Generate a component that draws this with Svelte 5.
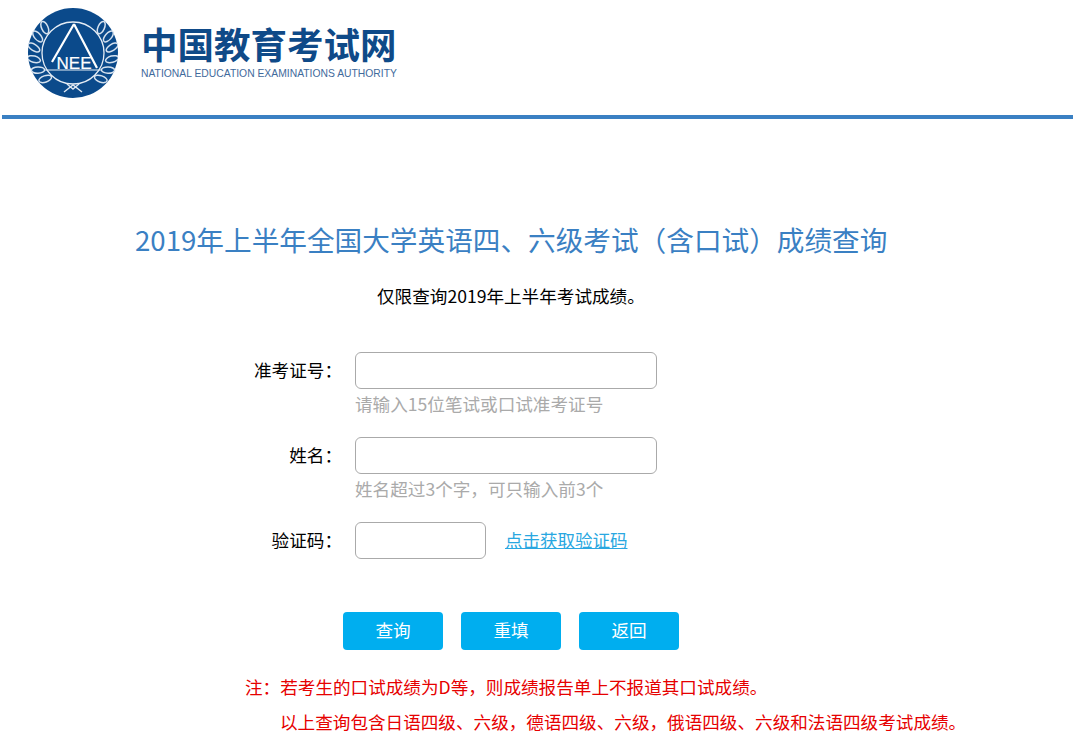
<script>
  const leaves = [
    [-138, 38], [-155, 39], [-172, 39.5], [-189, 39.5], [-206, 39], [-223, 38],
    [-42, 38], [-25, 39], [-8, 39.5], [9, 39.5], [26, 39], [43, 38]
  ].map(([deg, r]) => {
    const a = (deg * Math.PI) / 180;
    const left = deg < -90;
    return { x: 45 + r * Math.cos(a), y: 45 + r * Math.sin(a), rot: deg + 90 + (left ? 24 : -24) };
  });

  const fields = [
    { label: "准考证号：", hint: "请输入15位笔试或口试准考证号" },
    { label: "姓名：", hint: "姓名超过3个字，可只输入前3个" }
  ];
</script>

<div class="page">
  <header class="header">
    <svg class="emblem" viewBox="0 0 90 90" width="90" height="90" aria-label="NEEA">
      <circle cx="45" cy="45" r="45" fill="#0b4a8b" />
      {#each leaves as l}
        <ellipse cx={l.x} cy={l.y} rx="3.2" ry="6.6" fill="#0b4a8b" stroke="#d5e1ee" stroke-width="1.5" transform="rotate({l.rot} {l.x} {l.y})" />
      {/each}
      <circle cx="45" cy="45" r="31" fill="#0b4a8b" stroke="#e6edf5" stroke-width="1.3" />
      <path d="M46 16 L24 54 M46 16 L69 60" fill="none" stroke="#fff" stroke-width="2.2" />
      <path d="M16 62 H74" fill="none" stroke="#e6edf5" stroke-width="1.2" />
      <text x="46" y="60.5" text-anchor="middle" class="nee">NEE</text>
      <path d="M36 84 L45 77 L54 84 M39 76 L45 81 L51 76" fill="none" stroke="#dfe8f2" stroke-width="1.4" />
    </svg>
    <div class="brand">
      <div class="brand-cn">中国教育考试网</div>
      <div class="brand-en">NATIONAL EDUCATION EXAMINATIONS AUTHORITY</div>
    </div>
  </header>

  <main class="main">
    <h1 class="title">2019年上半年全国大学英语四、六级考试（含口试）成绩查询</h1>
    <p class="subtitle">仅限查询2019年上半年考试成绩。</p>

    <form class="form" onsubmit={(e) => e.preventDefault()}>
      {#each fields as f}
        <div class="row">
          <label class="label" for={f.label}>{f.label}</label>
          <div class="control">
            <input id={f.label} class="input" type="text" />
            <div class="hint">{f.hint}</div>
          </div>
        </div>
      {/each}
      <div class="row">
        <label class="label" for="code">验证码：</label>
        <div class="control code">
          <input id="code" class="input short" type="text" />
          <a class="link" href="#top">点击获取验证码</a>
        </div>
      </div>

      <div class="buttons">
        <button class="btn" type="submit">查询</button>
        <button class="btn" type="reset">重填</button>
        <button class="btn" type="button">返回</button>
      </div>
    </form>

    <div class="notes">
      <p>注：若考生的口试成绩为D等，则成绩报告单上不报道其口试成绩。</p>
      <p class="indent">以上查询包含日语四级、六级，德语四级、六级，俄语四级、六级和法语四级考试成绩。</p>
    </div>
  </main>
</div>

<style>
  :global(body) {
    margin: 0;
    background: #fff;
    font-family: "Noto Sans CJK SC", "Liberation Sans", sans-serif;
    color: #000;
  }

  .page {
    height: 755px;
    overflow: hidden;
  }

  .header {
    height: 107px;
    margin-left: 2px;
    padding: 8px 0 0 26px;
    display: flex;
    gap: 23px;
    border-bottom: 4px solid #3a80c3;
  }

  .emblem {
    flex: none;
  }

  .nee {
    font: 400 17px "Liberation Sans", sans-serif;
    fill: #fff;
    stroke: #fff;
    stroke-width: 0.2px;
  }

  .brand {
    padding-top: 14px;
  }

  .brand-cn {
    font-size: 36.5px;
    font-weight: 700;
    line-height: 44px;
    color: #0f4a88;
    white-space: nowrap;
  }

  .brand-en {
    margin-top: 2px;
    font: 10.35px/12px "Liberation Sans", sans-serif;
    color: #3f6a9c;
    white-space: nowrap;
  }

  .main {
    padding-top: 99px;
  }

  .title {
    margin: 0;
    padding-left: 135px;
    font-size: 27.65px;
    font-weight: 400;
    line-height: 42px;
    color: #3a80c3;
    white-space: nowrap;
  }

  .subtitle {
    margin: 23px 0 0;
    padding-left: 377px;
    font-size: 17.6px;
    line-height: 26px;
    white-space: nowrap;
  }

  .form {
    margin-top: 43px;
  }

  .row {
    display: flex;
    margin-bottom: 17px;
  }

  .label {
    width: 342px;
    flex: none;
    text-align: right;
    font-size: 17.6px;
    line-height: 36px;
    margin-right: 13px;
    white-space: nowrap;
  }

  .input {
    display: block;
    box-sizing: border-box;
    width: 302px;
    height: 37px;
    padding: 0 8px;
    background: #fff;
    border: 1px solid #aaa;
    border-radius: 6px;
    outline: none;
  }

  .short {
    width: 131px;
  }

  .hint {
    font-size: 17.6px;
    line-height: 30px;
    padding-bottom: 1px;
    color: #aaa;
    white-space: nowrap;
  }

  .code {
    display: flex;
    align-items: center;
    gap: 19px;
  }

  .link {
    font-size: 17.5px;
    line-height: 35px;
    padding-bottom: 2px;
    color: #29a7e1;
    white-space: nowrap;
  }

  .buttons {
    display: flex;
    gap: 18px;
    padding: 36px 0 0 343px;
  }

  .btn {
    width: 100px;
    height: 38px;
    padding: 0 0 3px;
    border: none;
    border-radius: 4px;
    background: #00aeef;
    color: #fff;
    font: inherit;
    font-size: 17.6px;
  }

  .notes {
    margin-top: 22px;
    padding-left: 245px;
    color: #e60000;
    font-size: 17.6px;
    line-height: 30px;
    white-space: nowrap;
  }

  .notes p {
    margin: 0 0 5px;
  }

  .notes .indent {
    padding-left: 35px;
  }
</style>
